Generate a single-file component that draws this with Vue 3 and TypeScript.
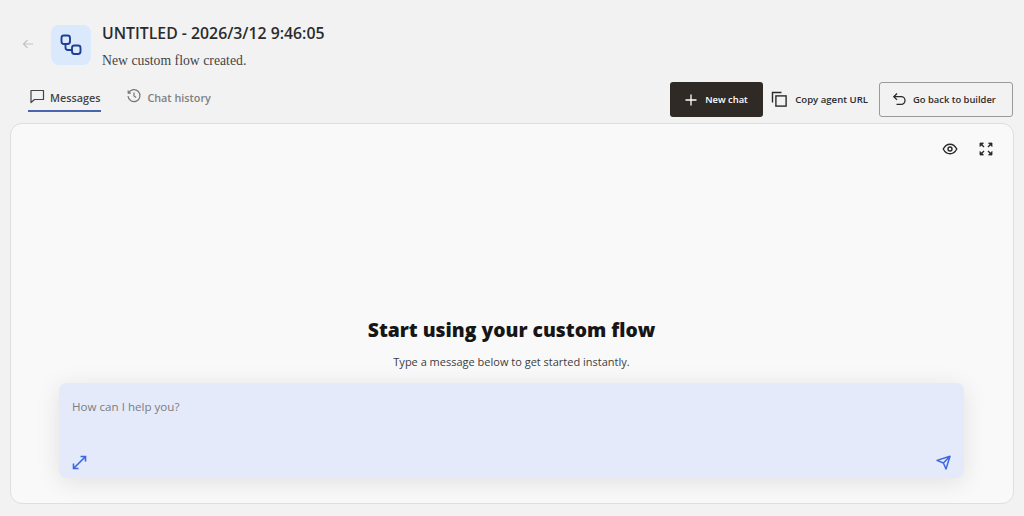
<script setup lang="ts">
const title = 'UNTITLED - 2026/3/12 9:46:05'
</script>

<template>
  <div class="page">
    <header class="head">
      <svg class="back" width="12" height="12" viewBox="0 0 12 12" fill="none" stroke="#c4c4c4" stroke-width="1.2"><path d="M11 6H1.5M5.5 2 1.5 6l4 4" /></svg>
      <div class="logo">
        <svg width="24" height="24" viewBox="0 0 24 24" fill="none" stroke="#1f3f94" stroke-width="1.9">
          <rect x="2.5" y="2.5" width="8.5" height="8.5" rx="2.4" />
          <rect x="13" y="12.5" width="8.5" height="8.5" rx="2.4" />
          <path d="M6.5 11v3.5q0 2.5 2.5 2.5H13" />
        </svg>
      </div>
      <div class="titles">
        <h1>{{ title }}</h1>
        <p>New custom flow created.</p>
      </div>
    </header>

    <div class="bar">
      <nav class="tabs">
        <div class="tab active">
          <svg width="16" height="16" viewBox="0 0 16 16" fill="none" stroke="#444" stroke-width="1.2"><path d="M2 2.5h12.5v9H5.5L2 14.5z" stroke-linejoin="round" /></svg>
          <span>Messages</span>
        </div>
        <div class="tab">
          <svg width="16" height="16" viewBox="0 0 16 16" fill="none" stroke="#777" stroke-width="1.2"><path d="M2.6 5a6 6 0 1 1-.6 3M2.2 2.5V5.2h2.7M8 4.6V8l2.2 1.4" /></svg>
          <span>Chat history</span>
        </div>
      </nav>
      <div class="actions">
        <button class="btn primary">
          <svg width="14" height="14" viewBox="0 0 14 14" fill="none" stroke="#fff" stroke-width="1.3"><path d="M7 1.5v11M1.5 7h11" /></svg>
          <span>New chat</span>
        </button>
        <button class="btn ghost">
          <svg width="17" height="17" viewBox="0 0 17 17" fill="none" stroke="#2a2a2a" stroke-width="1.4"><path d="M1.5 11.5V1.5h9" /><rect x="4.9" y="4.9" width="10.2" height="10.2" /></svg>
          <span>Copy agent URL</span>
        </button>
        <button class="btn outline">
          <svg width="15" height="15" viewBox="0 0 15 15" fill="none" stroke="#2a2a2a" stroke-width="1.3"><path d="M5 1.5 1.8 4.7 5 7.9M2 4.7h7.2a3.7 3.7 0 0 1 0 7.6H4.5" /></svg>
          <span>Go back to builder</span>
        </button>
      </div>
    </div>

    <main class="card">
      <div class="tools">
        <svg width="16" height="16" viewBox="0 0 16 16" fill="none" stroke="#2a2a2a" stroke-width="1.4"><path d="M1.2 8C3 4.7 5.3 3.2 8 3.2s5 1.5 6.8 4.8c-1.8 3.3-4.1 4.8-6.8 4.8S3 11.3 1.2 8z" /><circle cx="8" cy="8" r="2" /></svg>
        <svg width="16" height="16" viewBox="0 0 16 16" fill="#2a2a2a" stroke="#2a2a2a" stroke-width="1.4"><path d="M2 5.5V2h3.5zM14 5.5V2h-3.5zM2 10.5V14h3.5zM14 10.5V14h-3.5z" stroke-width="0.8" /><path d="M3 3l3 3M13 3l-3 3M3 13l3-3M13 13l-3-3" /></svg>
      </div>
      <div class="welcome">
        <h2>Start using your custom flow</h2>
        <p>Type a message below to get started instantly.</p>
      </div>
      <div class="composer">
        <div class="placeholder">How can I help you?</div>
        <div class="composer-icons">
          <svg width="15" height="15" viewBox="0 0 15 15" fill="none" stroke="#3d66e0" stroke-width="1.6"><path d="M1.5 8.5v5h5M1.5 13.5l12-12M8.5 1.5h5v5" /></svg>
          <svg width="15" height="15" viewBox="0 0 15 15" fill="none" stroke="#3d66e0" stroke-width="1.5" stroke-linejoin="round"><path d="M1 5.4 14 1.2 10 14 7.4 8 1 5.4zM7.4 8 14 1.2" /></svg>
        </div>
      </div>
    </main>
  </div>
</template>

<style>
html, body { margin: 0; background: #f2f2f2; }
</style>

<style scoped>
.page {
  box-sizing: border-box;
  width: 1024px;
  height: 516px;
  padding: 25px 10px 12px;
  display: flex;
  flex-direction: column;
  overflow: hidden;
  background: #f2f2f2;
  font-family: "Open Sans", "Noto Sans", sans-serif;
  color: #2b2b2b;
}
.head { display: flex; align-items: flex-start; height: 44px; padding-left: 12px; }
.back { margin: 13px 17px 0 0; }
.logo {
  width: 40px; height: 40px; border-radius: 8px; background: #dbe9fd;
  display: flex; align-items: center; justify-content: center;
  margin-right: 11px;
}
.titles h1 { margin: -2px 0 0; font-size: 15.8px; line-height: 20px; font-weight: 600; color: #2b2b2b; }
.titles p { margin: 9px 0 0; font-family: "Liberation Serif", serif; font-size: 13.75px; line-height: 17px; color: #444; }
.bar { display: flex; justify-content: space-between; height: 35px; margin-top: 13px; margin-bottom: 6px; }
.tabs { display: flex; gap: 24px; padding-left: 18px; }
.tab {
  display: flex; align-items: center; gap: 5px; height: 30px; padding: 0 1px;
  font-size: 10.8px; font-weight: 600; color: #808080;
  box-sizing: border-box; border-bottom: 2px solid transparent;
}
.tab span { padding-top: 2px; }
.tab.active { color: #444; border-bottom-color: #4a64ad; }
.actions { display: flex; align-items: stretch; gap: 7px; padding-right: 1px; }
.btn {
  display: flex; align-items: center; box-sizing: border-box; height: 35px;
  border-radius: 3px; font: 600 9.4px "Open Sans", "Noto Sans", sans-serif; color: #2b2b2b;
  background: transparent; border: 1px solid transparent; padding: 0;
}
.primary { width: 93px; background: #2f2a26; color: #fff; padding-left: 13px; gap: 7px; }
.ghost { gap: 7px; margin-right: 3px; font-size: 9.6px; }
.outline { width: 134px; border-color: #9a9a9a; padding-left: 12px; gap: 6px; }
.card {
  flex: 1; position: relative; box-sizing: border-box;
  background: #f9f9f9; border: 1px solid #dedede; border-radius: 12px;
  display: flex; flex-direction: column; justify-content: flex-end;
  padding: 0 49px 25px 48px; align-items: stretch;
}
.tools { position: absolute; top: 17px; right: 19px; display: flex; gap: 20px; }
.welcome { text-align: center; margin-bottom: 13px; }
.welcome h2 { margin: 0; font-size: 19.3px; line-height: 26px; font-weight: 800; color: #161616; }
.welcome p { margin: 11px 0 0; font-size: 11px; line-height: 16px; color: #3d3d3d; }
.composer {
  height: 95px; box-sizing: border-box; border-radius: 8px; background: #e4eafa;
  box-shadow: 0 4px 24px rgba(0, 0, 0, 0.1); padding: 15px 13px 8px;
  display: flex; flex-direction: column; justify-content: space-between;
}
.placeholder { font-size: 11.6px; line-height: 17px; color: #7c7c7c; }
.composer-icons { display: flex; justify-content: space-between; }
</style>
